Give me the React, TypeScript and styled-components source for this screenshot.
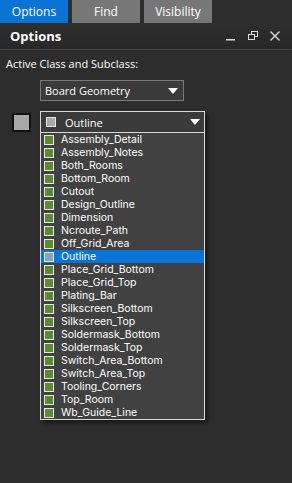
import styled, { createGlobalStyle } from "styled-components";

const LAYERS = [
  "Assembly_Detail",
  "Assembly_Notes",
  "Both_Rooms",
  "Bottom_Room",
  "Cutout",
  "Design_Outline",
  "Dimension",
  "Ncroute_Path",
  "Off_Grid_Area",
  "Outline",
  "Place_Grid_Bottom",
  "Place_Grid_Top",
  "Plating_Bar",
  "Silkscreen_Bottom",
  "Silkscreen_Top",
  "Soldermask_Bottom",
  "Soldermask_Top",
  "Switch_Area_Bottom",
  "Switch_Area_Top",
  "Tooling_Corners",
  "Top_Room",
  "Wb_Guide_Line",
];

const SELECTED = "Outline";

const GlobalStyle = createGlobalStyle`
  html, body {
    margin: 0;
    background: #2d2d2d;
  }
  body {
    font-family: "Open Sans", "Noto Sans", sans-serif;
    color: #fff;
  }
`;

const Panel = styled.div`
  width: 292px;
  height: 483px;
  background: #2d2d2d;
  overflow: hidden;
`;

const TabBar = styled.div`
  display: flex;
  gap: 4px;
  height: 23px;
`;

const Tab = styled.div<{ $active?: boolean }>`
  width: 68px;
  display: flex;
  align-items: center;
  justify-content: center;
  font-size: 12px;
  color: #fff;
  background: ${({ $active }) => ($active ? "#0a74d6" : "#777777")};
`;

const TitleBar = styled.div`
  height: 26px;
  display: flex;
  align-items: center;
  justify-content: space-between;
  padding: 0 12px 0 10px;
  background: linear-gradient(#2e2e2e, #272727);
  border-bottom: 1px solid #424242;
`;

const Title = styled.span`
  font-size: 13px;
  font-weight: 700;
`;

const WindowButtons = styled.div`
  display: flex;
  align-items: center;
  gap: 12px;

  svg {
    display: block;
  }
`;

const Body = styled.div`
  padding: 6px 6px 0;
`;

const Label = styled.div`
  font-size: 11px;
  line-height: 16px;
  margin-bottom: 8px;
`;

const SelectBox = styled.div`
  margin-left: 34px;
  width: 144px;
  height: 21px;
  box-sizing: border-box;
  border: 1px solid #7a7a7a;
  background: #3a3a3a;
  display: flex;
  align-items: center;
  justify-content: space-between;
  padding: 0 5px 0 4px;
  font-size: 11px;
`;

const Arrow = styled.span`
  width: 0;
  height: 0;
  border-left: 5px solid transparent;
  border-right: 5px solid transparent;
  border-top: 6px solid #fff;
`;

const SubclassRow = styled.div`
  display: flex;
  align-items: flex-start;
  margin-top: 10px;
  gap: 9px;
`;

const Swatch = styled.div`
  margin: 2px 0 0 6px;
  width: 19px;
  height: 19px;
  box-sizing: border-box;
  border: 2px solid #111;
  background: #a8a8a8;
`;

const Combo = styled.div`
  width: 165px;
  display: flex;
  flex-direction: column;
  box-shadow: 3px 3px 4px rgba(0, 0, 0, 0.45);
`;

const ComboHead = styled.div`
  height: 21px;
  box-sizing: border-box;
  border: 1px solid #d8d8d8;
  border-bottom: none;
  background: #3a3a3a;
  display: flex;
  align-items: center;
  padding: 0 4px 0 5px;
  font-size: 11px;

  ${Arrow} {
    margin-left: auto;
  }
`;

const HeadText = styled.span`
  margin-left: 9px;
`;

const List = styled.div`
  border: 1px solid #d8d8d8;
  background: #414141;
  display: flex;
  flex-direction: column;
`;

const Item = styled.div<{ $selected?: boolean }>`
  height: 13px;
  line-height: 13px;
  overflow: hidden;
  display: flex;
  align-items: center;
  gap: 7px;
  padding-left: 3px;
  font-family: Inter, "Open Sans", sans-serif;
  font-size: 10.5px;
  white-space: nowrap;
  background: ${({ $selected }) => ($selected ? "#0a74d6" : "transparent")};
`;

const Box = styled.span<{ $color: string }>`
  width: 10px;
  height: 10px;
  box-sizing: border-box;
  border: 1px solid #e8e8e8;
  background: ${({ $color }) => $color};
  flex-shrink: 0;
`;

const App = () => (
  <Panel>
    <GlobalStyle />
    <TabBar>
      <Tab $active>Options</Tab>
      <Tab>Find</Tab>
      <Tab>Visibility</Tab>
    </TabBar>

    <TitleBar>
      <Title>Options</Title>
      <WindowButtons>
        <svg width="10" height="10" viewBox="0 0 10 10">
          <rect x="0" y="8" width="9" height="1.5" fill="#ddd" />
        </svg>
        <svg width="10" height="10" viewBox="0 0 10 10">
          <rect x="3.5" y="0.5" width="6" height="5" fill="none" stroke="#ddd" />
          <rect x="0.5" y="3.5" width="6" height="5" fill="#2b2b2b" stroke="#ddd" />
        </svg>
        <svg width="10" height="10" viewBox="0 0 10 10">
          <path d="M0.5 0.5 L9.5 9.5 M9.5 0.5 L0.5 9.5" stroke="#ddd" strokeWidth="1.4" />
        </svg>
      </WindowButtons>
    </TitleBar>

    <Body>
      <Label>Active Class and Subclass:</Label>
      <SelectBox>
        <span>Board Geometry</span>
        <Arrow />
      </SelectBox>

      <SubclassRow>
        <Swatch />
        <Combo>
          <ComboHead>
            <Box $color="#a8a8a8" />
            <HeadText>Outline</HeadText>
            <Arrow />
          </ComboHead>
          <List>
            {LAYERS.map((name) => (
              <Item key={name} $selected={name === SELECTED}>
                <Box $color={name === SELECTED ? "#86a3c2" : "#5b8a34"} />
                <span>{name}</span>
              </Item>
            ))}
          </List>
        </Combo>
      </SubclassRow>
    </Body>
  </Panel>
);

export default App;
